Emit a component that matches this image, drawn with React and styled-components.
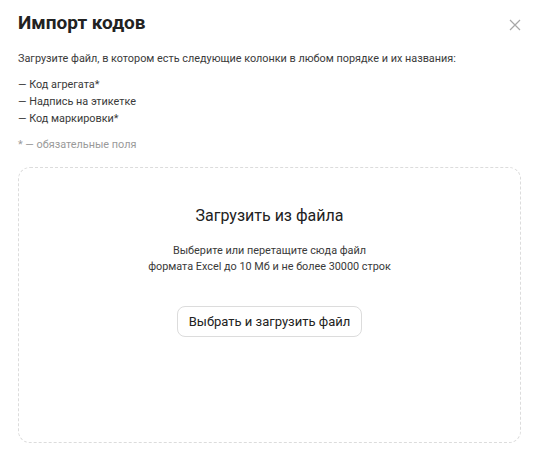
import styled, { createGlobalStyle } from "styled-components";

const GlobalStyle = createGlobalStyle`
  body {
    margin: 0;
    background: #fff;
    font-family: Roboto, "Noto Sans", sans-serif;
    color: #222;
  }
`;

const Modal = styled.div`
  width: 546px;
  height: 469px;
  box-sizing: border-box;
  padding: 10px 25px 0 18px;
  display: flex;
  flex-direction: column;
`;

const Header = styled.div`
  display: flex;
  justify-content: space-between;
  align-items: center;
`;

const Title = styled.h1`
  margin: 0;
  font-size: 19px;
  font-weight: 700;
  line-height: 26px;
  color: #222;
`;

const CloseButton = styled.button`
  border: none;
  background: none;
  padding: 0;
  margin-top: 4px;
  width: 12px;
  height: 12px;
  cursor: pointer;
  display: flex;
`;

const Text = styled.p`
  margin: ${(p) => p.$margin || "0"};
  font-size: 10.85px;
  line-height: 17px;
  color: ${(p) => (p.$muted ? "#9a9a9a" : "#3a3a3a")};
`;

const List = styled.ul`
  list-style: none;
  margin: 9px 0 0;
  padding: 0;
`;

const Item = styled.li`
  font-size: 10.85px;
  line-height: 17px;
  color: #3a3a3a;
`;

const DropZone = styled.div`
  margin-top: 14px;
  height: 276px;
  box-sizing: border-box;
  border: 1px dashed #dcdcdc;
  border-radius: 12px;
  display: flex;
  flex-direction: column;
  align-items: center;
  padding-top: 37px;
`;

const ZoneTitle = styled.h2`
  margin: 0;
  font-size: 16px;
  font-weight: 400;
  line-height: 22px;
  color: #222;
`;

const Hint = styled.p`
  margin: 16px 0 0;
  font-size: 10.85px;
  line-height: 16px;
  text-align: center;
  color: #3a3a3a;
`;

const UploadButton = styled.button`
  margin-top: 31px;
  height: 31px;
  padding: 0 11px;
  border: 1px solid #dcdcdc;
  border-radius: 8px;
  background: #fff;
  font-family: inherit;
  font-size: 13px;
  color: #222;
  cursor: pointer;
`;

const App = () => {
  return (
    <>
      <GlobalStyle />
      <Modal>
        <Header>
          <Title>Импорт кодов</Title>
          <CloseButton aria-label="Закрыть">
            <svg width="12" height="12" viewBox="0 0 12 12">
              <path d="M1 1L11 11M11 1L1 11" stroke="#a8a8a8" strokeWidth="1.2" />
            </svg>
          </CloseButton>
        </Header>
        <Text $margin="14px 0 0">
          Загрузите файл, в котором есть следующие колонки в любом порядке и их названия:
        </Text>
        <List>
          <Item>— Код агрегата*</Item>
          <Item>— Надпись на этикетке</Item>
          <Item>— Код маркировки*</Item>
        </List>
        <Text $muted $margin="9px 0 0">* — обязательные поля</Text>
        <DropZone>
          <ZoneTitle>Загрузить из файла</ZoneTitle>
          <Hint>
            Выберите или перетащите сюда файл
            <br />
            формата Excel до 10 Мб и не более 30000 строк
          </Hint>
          <UploadButton>Выбрать и загрузить файл</UploadButton>
        </DropZone>
      </Modal>
    </>
  );
};

export default App;
